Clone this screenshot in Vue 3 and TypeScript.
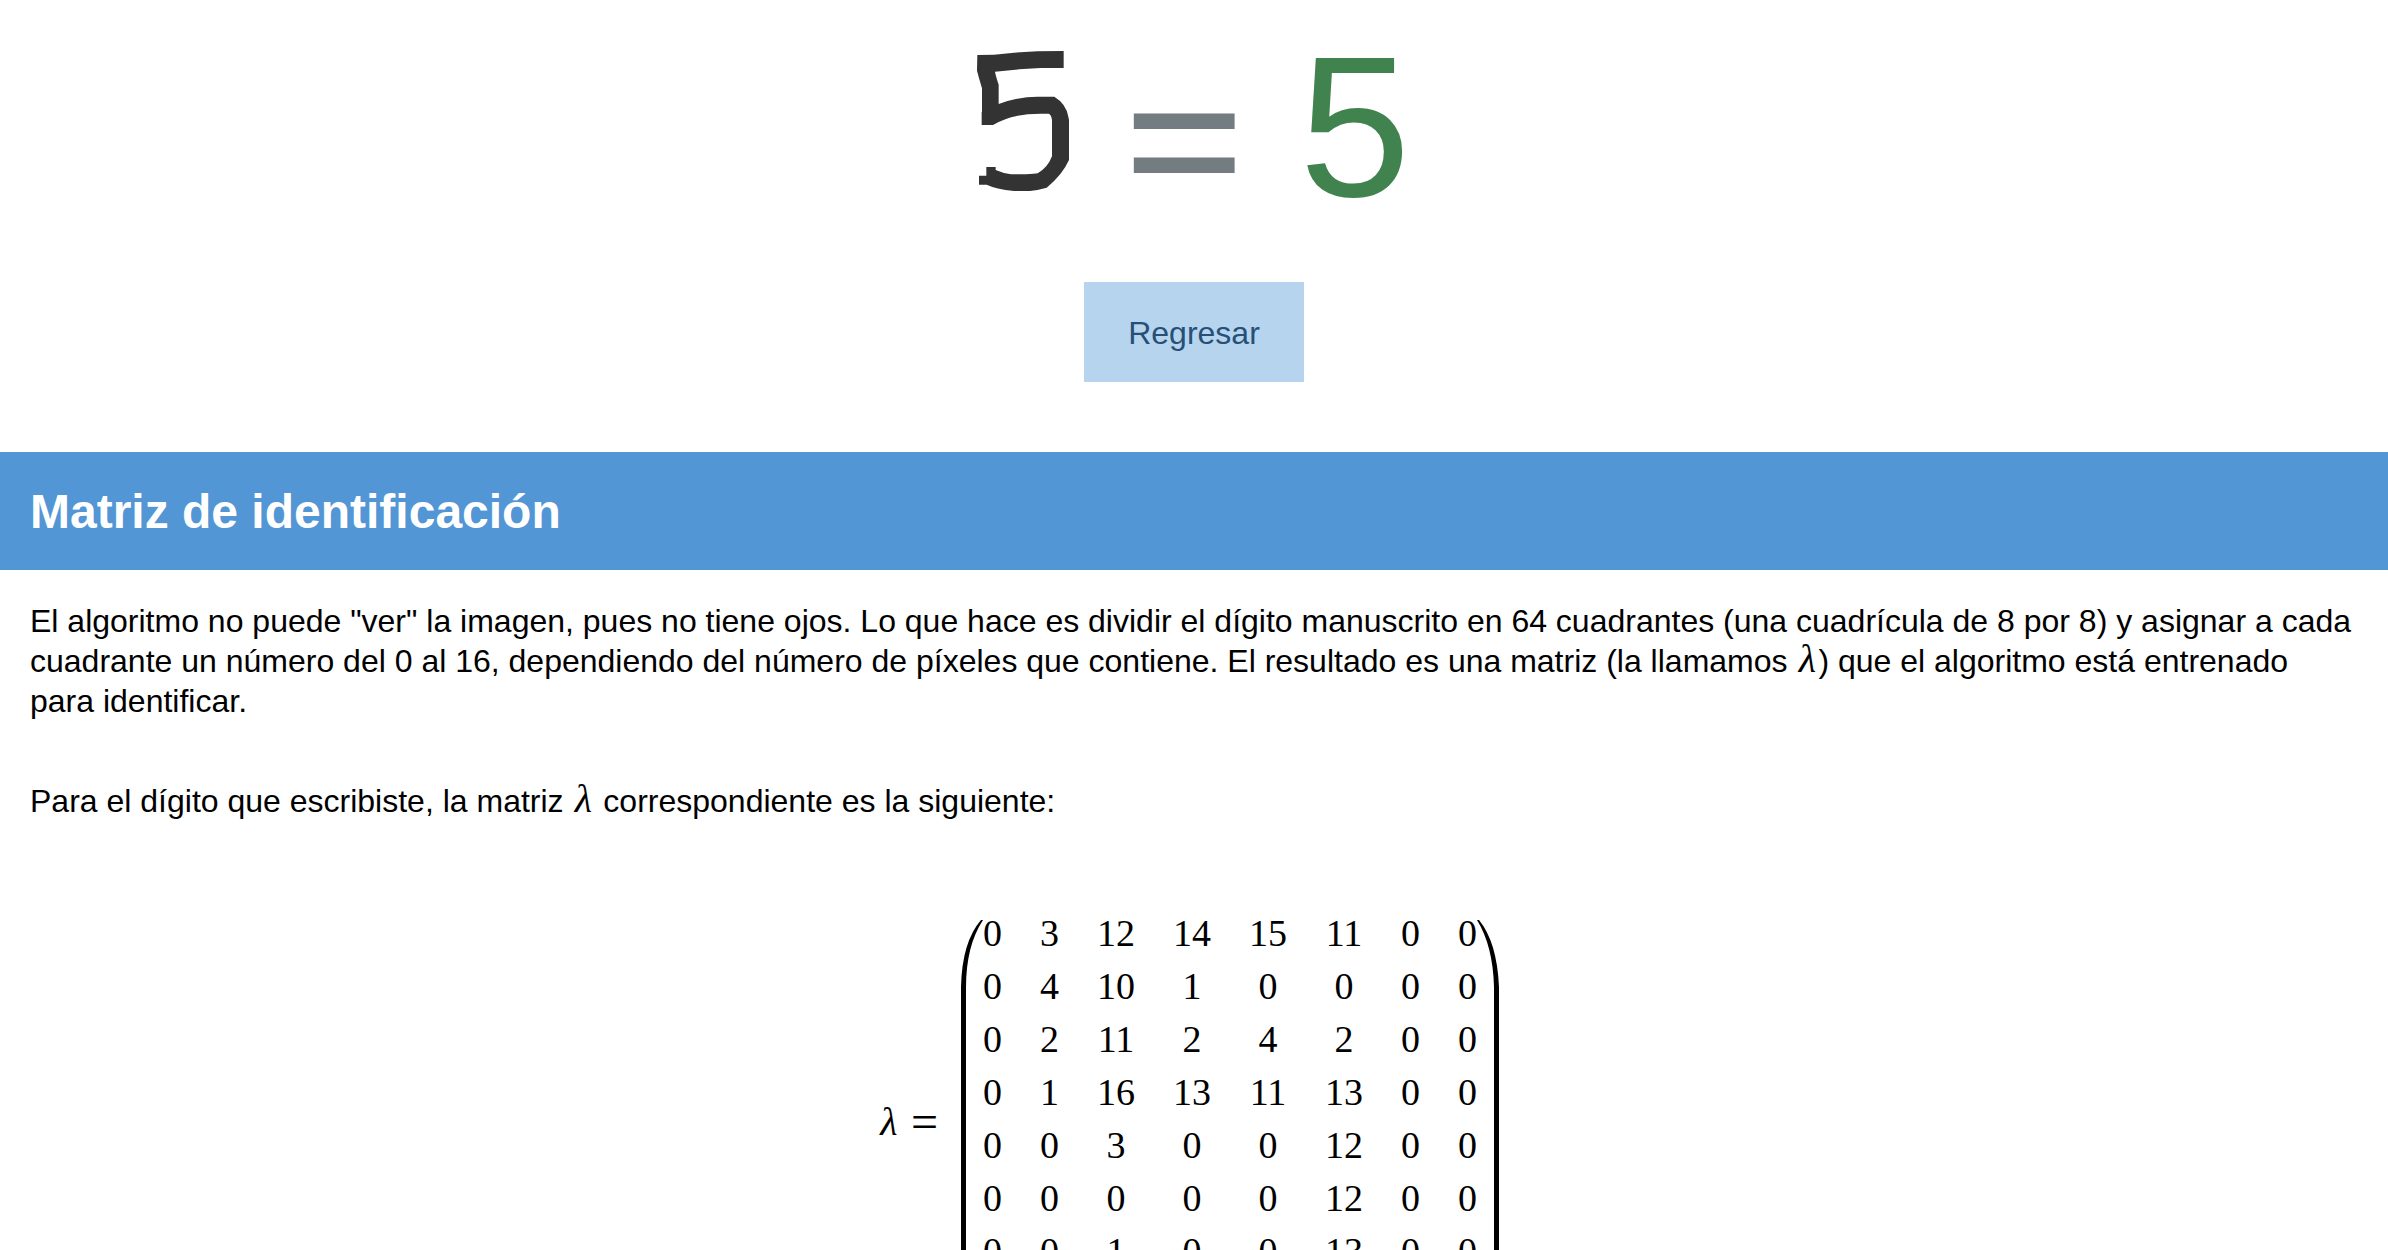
<script setup lang="ts">
const predicted = 5

const matrix: number[][] = [
  [0, 3, 12, 14, 15, 11, 0, 0],
  [0, 4, 10, 1, 0, 0, 0, 0],
  [0, 2, 11, 2, 4, 2, 0, 0],
  [0, 1, 16, 13, 11, 13, 0, 0],
  [0, 0, 3, 0, 0, 12, 0, 0],
  [0, 0, 0, 0, 0, 12, 0, 0],
  [0, 0, 1, 0, 0, 13, 0, 0],
  [0, 0, 0, 0, 0, 0, 0, 0],
]
</script>

<template>
  <main class="page">
    <section class="result">
      <svg class="drawing" viewBox="54 33 276 420" role="img" aria-label="Dígito manuscrito">
        <path
          fill="#333333"
          d="M55 45L105 44L165 38L235 34L314 33V84H245L180 88L108 95Q110 106 117 128L119 134V192Q180 170 235 170H286Q322 192 328 230L330 240V360Q310 405 263 443Q235 451 213 453H165Q110 447 83 434H60V407H82V381H110V390Q130 399 156 403H200Q228 401 236 400Q266 383 279 349V240Q277 224 269 221H250Q160 220 102 255H68V216H69V145Q60 115 54 92Z"
        />
      </svg>
      <span class="equals">=</span>
      <span class="digit">{{ predicted }}</span>
    </section>

    <div class="actions">
      <button type="button" class="back">Regresar</button>
    </div>

    <h2 class="banner">Matriz de identificación</h2>

    <section class="content">
      <p>
        El algoritmo no puede "ver" la imagen, pues no tiene ojos. Lo que hace es dividir el dígito
        manuscrito en 64 cuadrantes (una cuadrícula de 8 por 8) y asignar a cada cuadrante un número
        del 0 al 16, dependiendo del número de píxeles que contiene. El resultado es una matriz (la
        llamamos <i class="math">λ</i>) que el algoritmo está entrenado para identificar.
      </p>
      <p>
        Para el dígito que escribiste, la matriz <i class="math">λ</i> correspondiente es la
        siguiente:
      </p>
    </section>

    <section class="formula">
      <i class="math">λ</i>
      <span class="relation">=</span>
      <svg class="paren" viewBox="0 0 33 404" preserveAspectRatio="none" aria-hidden="true">
        <path d="M31 0Q12 22 11 67V337Q12 382 31 404L33 404Q16 378 16 337V67Q16 26 33 0Z" />
      </svg>
      <table class="matrix">
        <tbody>
          <tr v-for="(row, r) in matrix" :key="r">
            <td v-for="(value, c) in row" :key="c">{{ value }}</td>
          </tr>
        </tbody>
      </table>
      <svg class="paren" viewBox="0 0 33 404" preserveAspectRatio="none" aria-hidden="true">
        <path d="M2 0Q20 22 22 67V337Q20 382 2 404L0 404Q16 378 17 337V67Q16 26 0 0Z" />
      </svg>
    </section>
  </main>
</template>

<style>
body {
  margin: 0;
  background: #ffffff;
}
</style>

<style scoped>
.page {
  font-family: "Liberation Sans", Arial, Helvetica, sans-serif;
  font-size: 32px;
  line-height: 40px;
  color: #000000;
}

.result {
  display: flex;
  justify-content: center;
  align-items: center;
  gap: 52px;
  height: 242px;
  font-size: 200px;
  line-height: 200px;
}

.drawing {
  width: 92px;
  height: 140px;
}

.equals {
  padding-top: 30px;
  color: #737c80;
  font-family: "Noto Sans", "Open Sans", sans-serif;
  font-size: 220px;
}

.digit {
  padding-top: 12px;
  color: #41834f;
}

.actions {
  display: flex;
  justify-content: center;
  padding: 40px 0 70px;
}

.back {
  padding: 31px 44px 29px;
  border: 0;
  background: #b6d4ee;
  color: #265077;
  font: inherit;
  cursor: pointer;
}

.banner {
  margin: 0;
  padding: 30px 30px 28px;
  background: #5296d5;
  color: #ffffff;
  font-size: 48px;
  line-height: 60px;
}

.content {
  padding: 31px 30px 0;
}

.content p {
  margin: 0 0 60px;
}

.math {
  display: inline-block;
  width: 22px;
  font-family: "Liberation Serif", "Times New Roman", serif;
  font-size: 40px;
  line-height: 32px;
  text-align: center;
}

.formula {
  display: flex;
  justify-content: center;
  align-items: center;
  padding: 26px 0 40px;
  font-family: "Liberation Serif", "Times New Roman", serif;
  font-size: 38px;
}

.relation {
  margin: 0 12px 0 11px;
  font-size: 48px;
}

.paren {
  width: 33px;
  height: 404px;
}

.matrix {
  margin-bottom: 6px;
  border-collapse: collapse;
  line-height: 53px;
}

.matrix td {
  padding: 0 19px;
  text-align: center;
}

.matrix td:first-child {
  padding-left: 0;
}

.matrix td:last-child {
  padding-right: 0;
}
</style>
